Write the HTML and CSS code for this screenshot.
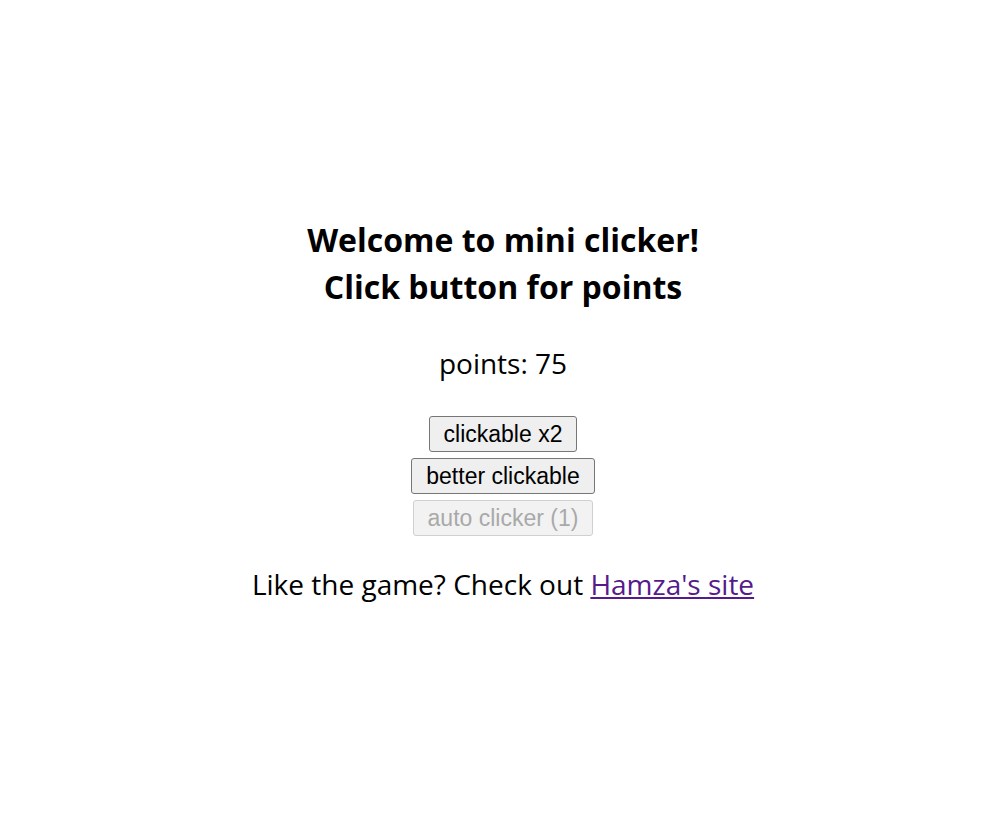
FILE: index.html
```html
<!DOCTYPE html>
<html lang="en">
<head>
<meta charset="utf-8">
<title>mini clicker</title>
<link rel="stylesheet" href="styles.css">
</head>
<body>
<main class="game">
  <h1 class="title">Welcome to mini clicker!<br>Click button for points</h1>
  <p class="points">points: 75</p>
  <div class="buttons">
    <button class="btn">clickable x2</button>
    <button class="btn">better clickable</button>
    <button class="btn" disabled>auto clicker (1)</button>
  </div>
  <p class="footer">Like the game? Check out <a class="link" href="#">Hamza's site</a></p>
</main>
</body>
</html>
```
FILE: styles.css
```css
html, body {
  margin: 0;
  padding: 0;
  background: #fff;
}
body {
  font-family: "Open Sans", "Noto Sans", sans-serif;
  color: #000;
}
.game {
  display: flex;
  flex-direction: column;
  align-items: center;
  text-align: center;
  padding: 216px 0 0 7px;
}
.title {
  margin: 0;
  font-size: 32px;
  line-height: 47px;
  font-weight: 700;
}
.points {
  margin: 35px 0 0;
  font-size: 28px;
  line-height: 36px;
}
.buttons {
  margin-top: 35px;
  display: flex;
  flex-direction: column;
  align-items: center;
  gap: 6px;
}
.btn {
  font-family: "Liberation Sans", Arial, sans-serif;
  font-size: 23px;
  line-height: 26px;
  height: 36px;
  padding: 0 14px;
  color: #000;
  background: #efefef;
  border: 1px solid #767676;
  border-radius: 3px;
}
.btn:disabled {
  color: #a9a9a9;
  background: #f2f2f2;
  border-color: #d0d0d0;
}
.footer {
  margin: 30px 0 0;
  font-size: 28px;
  line-height: 36px;
}
.link {
  color: #551a8b;
}
```
